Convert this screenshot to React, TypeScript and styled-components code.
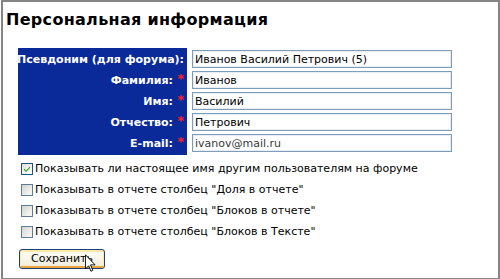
import React from "react";
import styled, { createGlobalStyle } from "styled-components";

const GlobalStyle = createGlobalStyle`
  html, body {
    margin: 0;
    padding: 0;
    background: #ffffff;
  }
  body {
    font-family: "DejaVu Sans", Verdana, sans-serif;
  }
`;

const Frame = styled.div`
  box-sizing: border-box;
  width: 499px;
  height: 279px;
  margin-left: 1px;
  border: 2px solid #858585;
  border-bottom-width: 1px;
  background: #ffffff;
  overflow: hidden;
`;

const Title = styled.h1`
  margin: 0;
  padding: 7px 0 0 3px;
  font-size: 16px;
  line-height: 21px;
  font-weight: 700;
  letter-spacing: 0.3px;
  color: #000000;
`;

const Form = styled.div`
  margin: 18px 0 0 15px;
`;

const Rows = styled.div`
  display: flex;
  flex-direction: column;
`;

const Row = styled.div`
  display: flex;
  gap: 5px;
`;

const Label = styled.div<{ $last?: boolean }>`
  box-sizing: border-box;
  width: 169px;
  height: ${(p) => (p.$last ? "23px" : "21px")};
  padding: 2px 3px ${(p) => (p.$last ? "3px" : "1px")} 0;
  background: #0a2a9a;
  color: #ffffff;
  font-size: 11px;
  font-weight: 700;
  display: flex;
  align-items: center;
  justify-content: flex-end;
  white-space: nowrap;
`;

const Star = styled.span`
  display: inline-block;
  width: 11px;
  text-align: right;
  color: #ff2020;
  font-size: 13px;
  position: relative;
  top: -2px;
`;

const Field = styled.input<{ $muted?: boolean }>`
  box-sizing: border-box;
  width: 260px;
  height: 18px;
  margin-top: 2px;
  padding: 0 0 0 2px;
  border: 1px solid #7f9db9;
  box-shadow: inset 0 0 0 1px #e6edf4;
  font-family: "DejaVu Sans", Verdana, sans-serif;
  font-size: 11px;
  color: ${(p) => (p.$muted ? "#3a3a3a" : "#000000")};
  background: #ffffff;
  outline: none;
`;

const Options = styled.div`
  margin: 3px 0 0 3px;
  display: flex;
  flex-direction: column;
`;

const Option = styled.label`
  display: flex;
  align-items: center;
  height: 21px;
  font-size: 11px;
  color: #000000;
  white-space: nowrap;
`;

const Box = styled.span<{ $checked?: boolean }>`
  box-sizing: border-box;
  width: 12px;
  height: 12px;
  margin-right: 2px;
  border: 1px solid ${(p) => (p.$checked ? "#1c5180" : "#5e7c99")};
  background: ${(p) =>
    p.$checked
      ? "linear-gradient(135deg, #dcdcd7 0%, #ffffff 80%)"
      : "linear-gradient(135deg, #d4d4ce 0%, #f4f4f2 80%)"};
  display: flex;
  align-items: center;
  justify-content: center;
`;

const ButtonWrap = styled.div`
  position: relative;
  margin: 5px 0 0 1px;
  width: 90px;
`;

const SaveButton = styled.button`
  box-sizing: border-box;
  width: 86px;
  height: 20px;
  padding: 0;
  border: 1px solid #1d3e78;
  border-radius: 3px;
  background: linear-gradient(#fffef6, #f2efdf 85%, #e4dfc8);
  box-shadow: inset 0 1px 0 1px #fde9a8, inset 0 -1px 0 1px #eba33a;
  font-family: "DejaVu Sans", Verdana, sans-serif;
  font-size: 11px;
  color: #000000;
`;

const Cursor = styled.svg`
  position: absolute;
  left: 66px;
  top: 7px;
`;

const fields = [
  { label: "Псевдоним (для форума):", value: "Иванов Василий Петрович (5)", star: false },
  { label: "Фамилия:", value: "Иванов", star: true },
  { label: "Имя:", value: "Василий", star: true },
  { label: "Отчество:", value: "Петрович", star: true },
  { label: "E-mail:", value: "ivanov@mail.ru", star: true },
];

const options = [
  { text: "Показывать ли настоящее имя другим пользователям на форуме", checked: true },
  { text: 'Показывать в отчете столбец "Доля в отчете"', checked: false },
  { text: 'Показывать в отчете столбец "Блоков в отчете"', checked: false },
  { text: 'Показывать в отчете столбец "Блоков в Тексте"', checked: false },
];

const App = () => {
  return (
    <>
      <GlobalStyle />
      <Frame>
        <Title>Персональная информация</Title>
        <Form>
          <Rows>
            {fields.map((f, i) => (
              <Row key={f.label}>
                <Label $last={i === fields.length - 1}>
                  {f.label}
                  {f.star && <Star>*</Star>}
                </Label>
                <Field
                  defaultValue={f.value}
                  $muted={f.value.includes("@")}
                />
              </Row>
            ))}
          </Rows>
          <Options>
            {options.map((o) => (
              <Option key={o.text}>
                <Box $checked={o.checked}>
                  {o.checked && (
                    <svg width="8" height="8" viewBox="0 0 8 8">
                      <path
                        d="M1 3.5 L3 5.5 L7 1.5 L7 3 L3 7 L1 5 Z"
                        fill="#21a121"
                      />
                    </svg>
                  )}
                </Box>
                {o.text}
              </Option>
            ))}
          </Options>
          <ButtonWrap>
            <SaveButton>Сохранить</SaveButton>
            <Cursor width="11" height="19" viewBox="0 0 12 20">
              <path
                d="M0.5 0.5 L0.5 16 L4 12.5 L6.5 18.5 L8.5 17.5 L6 11.5 L11 11.5 Z"
                fill="#ffffff"
                stroke="#000000"
                strokeWidth="1"
                strokeLinejoin="miter"
              />
            </Cursor>
          </ButtonWrap>
        </Form>
      </Frame>
    </>
  );
};

export default App;
